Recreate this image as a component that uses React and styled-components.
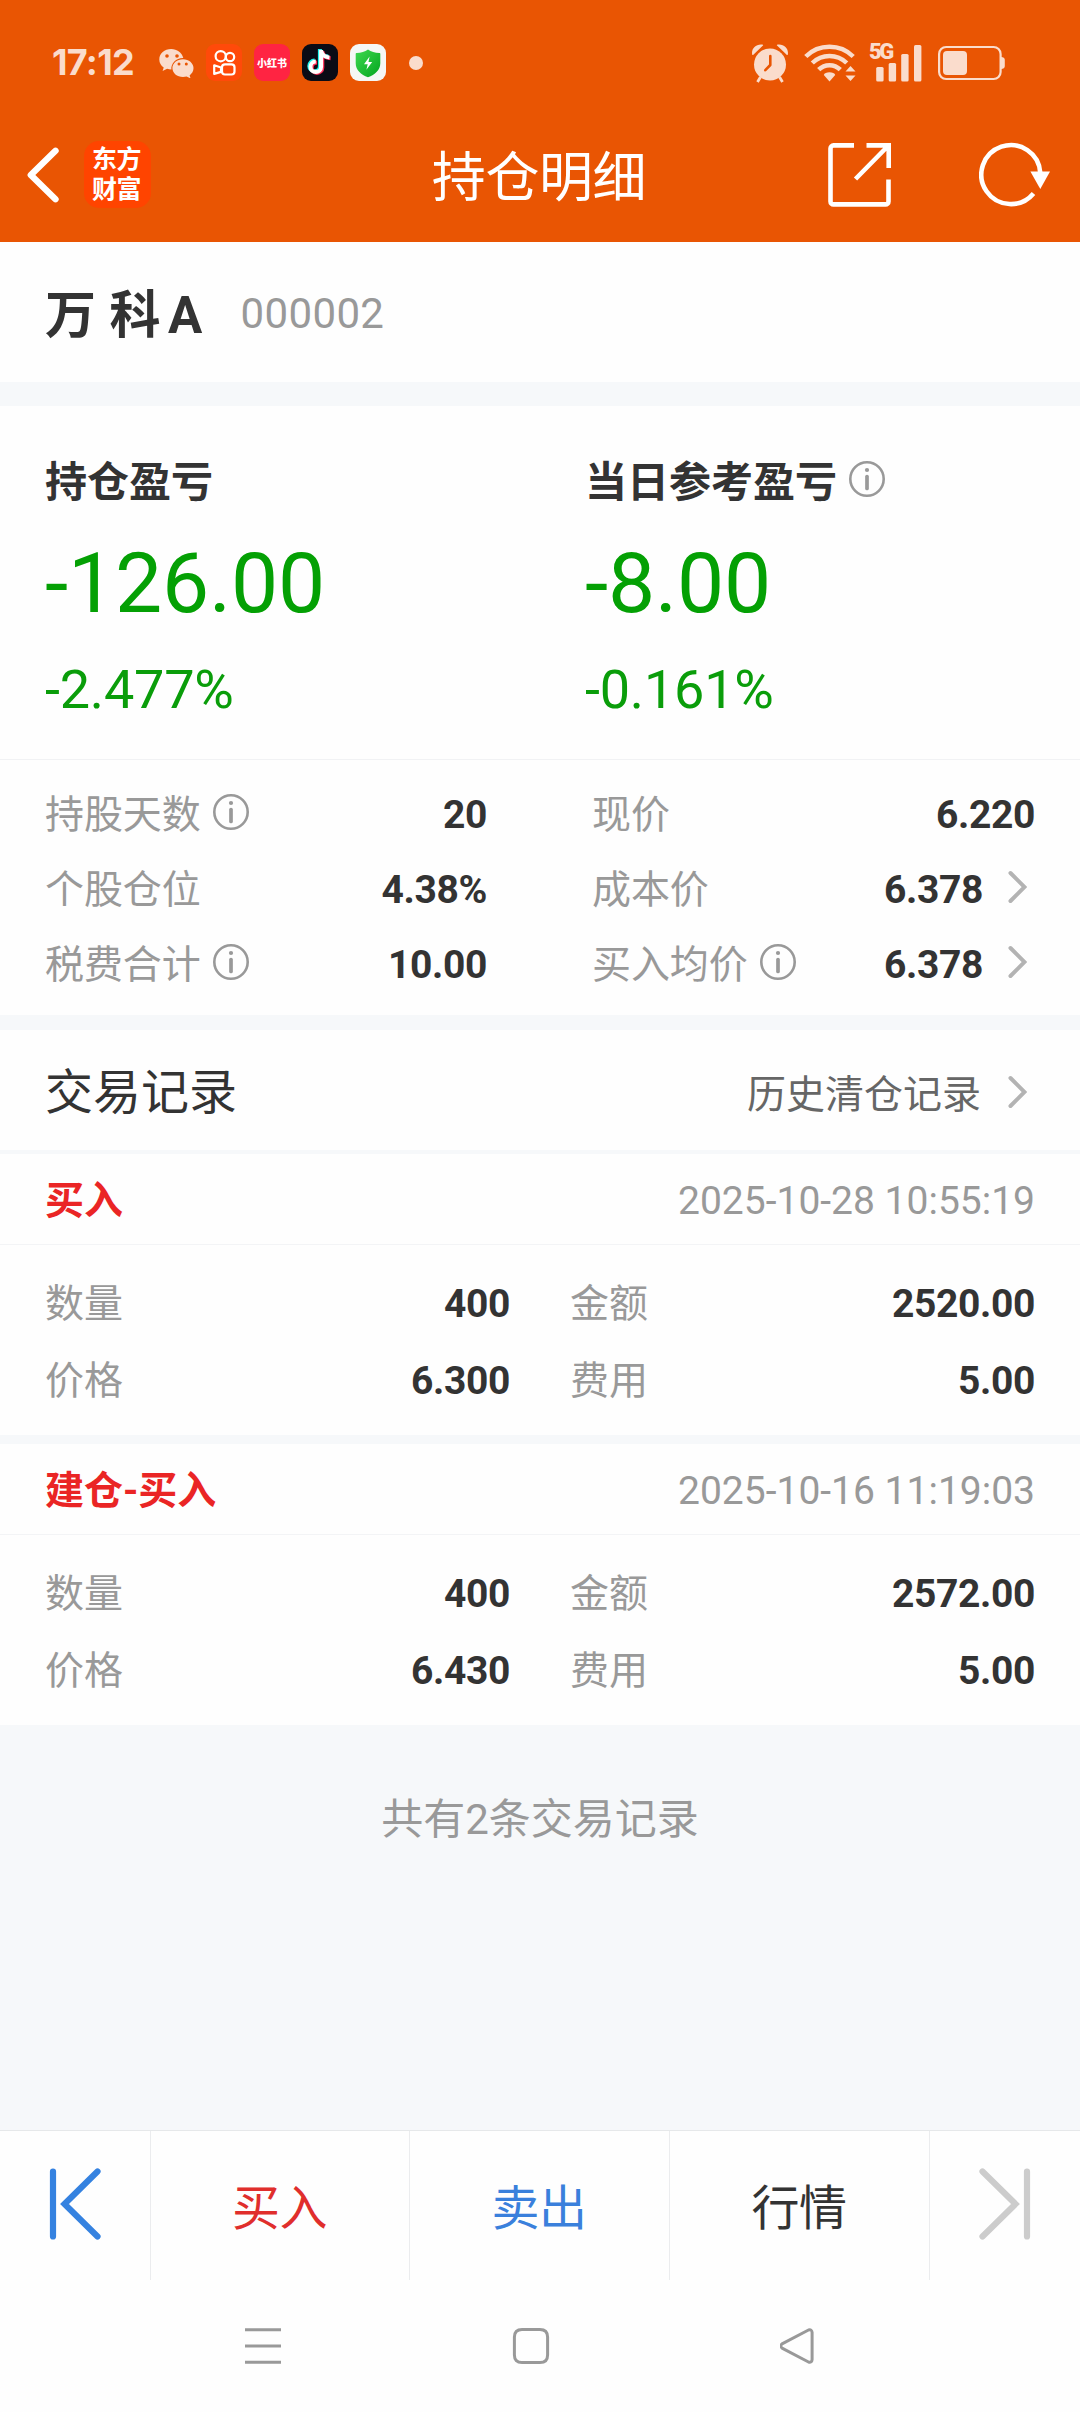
import React from "react";
import styled, { createGlobalStyle } from "styled-components";

const GlobalStyle = createGlobalStyle`
  html, body { margin: 0; padding: 0; background: #f6f8fa; }
  body { font-family: Roboto, "Noto Sans CJK SC", sans-serif; color: #333; }
  *, *::before, *::after { box-sizing: border-box; }
  svg { display: block; flex: none; }
`;

const TINT = "#fadccc";

const Screen = styled.div`
  width: 1080px;
  height: 2412px;
  display: flex;
  flex-direction: column;
  overflow: hidden;
  background: #f6f8fa;
`;

const Header = styled.header`
  background: #e95503;
  height: 242px;
  flex: none;
`;

const StatusBar = styled.div`
  height: 107px;
  padding: 18px 75px 0 52px;
  display: flex;
  align-items: center;
  justify-content: space-between;
  color: ${TINT};
`;

const StatusGroup = styled.div`
  display: flex;
  align-items: center;
  gap: ${(p) => p.$gap}px;
`;

const Clock = styled.span`
  width: 95px;
  padding-bottom: 2px;
  font: 700 36px/44px Inter, sans-serif;
  letter-spacing: -0.7px;
`;

const AppIcon = styled.span`
  width: 36px;
  height: 37px;
  border-radius: 9px;
  background: ${(p) => p.$bg};
  display: flex;
  align-items: center;
  justify-content: center;
  color: #fff;
  font: 900 10px/12px "Noto Sans CJK SC", sans-serif;
  white-space: nowrap;
`;

const Dot = styled.span`
  width: 14px;
  height: 14px;
  margin-left: 11px;
  border-radius: 50%;
  background: ${TINT};
`;

const Signal = styled.span`
  position: relative;
  width: 52px;
  height: 38px;
  margin: 0 1px 0 -1px;
`;

const SignalLabel = styled.span`
  position: absolute;
  left: -1px;
  top: -1px;
  font: 900 22px/18px Roboto, sans-serif;
  letter-spacing: -2.4px;
`;

const NavBar = styled.div`
  height: 135px;
  display: grid;
  grid-template-columns: 1fr auto 1fr;
  align-items: center;
  padding: 0 29px 0 27px;
`;

const NavSide = styled.div`
  display: flex;
  align-items: center;
  justify-content: ${(p) => p.$align};
  gap: ${(p) => p.$gap}px;
`;

const Brand = styled.div`
  width: 67px;
  height: 67px;
  padding: 4px 2px 0 0;
  border-radius: 15px;
  background: #ff4400;
  color: #fff;
  font: 700 25px/30px Roboto, "Noto Sans CJK SC", sans-serif;
  letter-spacing: -0.6px;
  text-align: center;
`;

const Title = styled.h1`
  margin: 0;
  padding-top: 9px;
  color: #fff;
  font-size: 54px;
  line-height: 64px;
  font-weight: 400;
  letter-spacing: -0.4px;
`;

const StockBar = styled.section`
  height: 140px;
  background: #fefefe;
  padding: 4px 45px 0;
  display: flex;
  align-items: center;
`;

const StockName = styled.h2`
  margin: 0;
  padding-top: 3px;
  font-size: 51px;
  line-height: 60px;
  font-weight: 700;
  letter-spacing: 0.4px;
  span { margin-left: 7px; }
`;

const StockCode = styled.span`
  margin-left: 38px;
  color: #999;
  font-size: 42px;
  line-height: 60px;
  letter-spacing: 0.35px;
`;

const Band = styled.div`
  height: ${(p) => p.$h}px;
  flex: none;
  background: #f6f8fa;
`;

const PnlSection = styled.section`
  height: 353px;
  background: #fefefe;
  padding: 50px 45px 0;
  display: grid;
  grid-template-columns: 540px 1fr;
`;

const PnlTitle = styled.h3`
  margin: 0;
  height: 54px;
  display: flex;
  align-items: center;
  gap: 12px;
  font-size: 42px;
  line-height: 54px;
  font-weight: 700;
  svg { margin-top: -8px; }
`;

const PnlAmount = styled.div`
  margin-top: 24px;
  color: #04a004;
  font-size: 84px;
  line-height: 100px;
  letter-spacing: -0.2px;
`;

const PnlPercent = styled.div`
  margin-top: 24px;
  color: #0a9d0a;
  font-size: 54px;
  line-height: 64px;
  letter-spacing: -0.2px;
`;

const StatsSection = styled.section`
  height: 256px;
  background: #fefefe;
  border-top: 1px solid #f1f2f4;
  padding: 17px 45px 0 45px;
  display: grid;
  grid-template-columns: 442px 443px;
  justify-content: space-between;
  grid-auto-rows: 75px;
`;

const Row = styled.div`
  display: flex;
  align-items: center;
  justify-content: space-between;
  font-size: 39px;
  line-height: 46px;
`;

const Label = styled.span`
  display: flex;
  align-items: center;
  gap: 12px;
  color: #999;
  letter-spacing: -0.1px;
  svg { margin-top: -5px; }
`;

const Value = styled.span`
  display: flex;
  align-items: center;
  gap: 25px;
  color: #333;
  font-weight: 700;
  letter-spacing: -0.35px;
  svg { margin: -6px 8px 0 0; }
`;

const RecordsHead = styled.section`
  height: 120px;
  background: #fefefe;
  padding: 6px 45px 0 45px;
  display: flex;
  align-items: center;
  justify-content: space-between;
`;

const RecordsTitle = styled.h3`
  margin: 0;
  font-size: 48px;
  line-height: 58px;
  font-weight: 400;
`;

const HistoryLink = styled.div`
  display: flex;
  align-items: center;
  gap: 27px;
  padding-top: 4px;
  color: #666;
  font-size: 39px;
  line-height: 46px;
  svg { margin: -7px 8px 0 0; }
`;

const Record = styled.article`
  height: 281px;
  background: #fefefe;
`;

const RecordHead = styled.div`
  height: 91px;
  padding: 4px 45px 0 45px;
  border-bottom: 1px solid #f3f4f6;
  display: flex;
  align-items: center;
  justify-content: space-between;
  font-size: 39px;
  line-height: 46px;
`;

const RecordType = styled.span`
  color: #ea2525;
  font-weight: 700;
`;

const RecordTime = styled.time`
  color: #999;
`;

const RecordGrid = styled.div`
  padding: 20px 45px 0 45px;
  display: grid;
  grid-template-columns: 465px 465px;
  justify-content: space-between;
  grid-auto-rows: 77px;
`;

const Summary = styled.p`
  flex: 1;
  margin: 0;
  padding-top: 70px;
  text-align: center;
  color: #999;
  font-size: 42px;
  line-height: 50px;
`;

const ActionBar = styled.nav`
  height: 150px;
  border-top: 1px solid #e6e8ea;
  background: #fefefe;
  display: grid;
  grid-template-columns: 150px 259px 260px 260px 151px;
`;

const Action = styled.button`
  border: 0;
  border-left: ${(p) => (p.$first ? "0" : "1px solid #ebecee")};
  background: none;
  padding: ${(p) => (p.$icon ? "0 0 3px" : "6px 1px 0 0")};
  color: ${(p) => p.$color};
  font: 400 48px/58px Roboto, "Noto Sans CJK SC", sans-serif;
  letter-spacing: -0.5px;
  display: flex;
  align-items: center;
  justify-content: center;
`;

const SystemBar = styled.div`
  height: 132px;
  flex: none;
  background: #fefefe;
  display: flex;
  align-items: center;
  gap: 230px;
  padding-left: 244px;
`;

const InfoIcon = () => (
  <svg width="36" height="36" viewBox="0 0 36 36" fill="none" stroke="#999">
    <circle cx="18" cy="18" r="16.7" strokeWidth="2.6" />
    <circle cx="18" cy="9" r="2.1" fill="#999" stroke="none" />
    <path d="M18 15.5v12" strokeWidth="3.7" strokeLinecap="round" />
  </svg>
);

const Chevron = () => (
  <svg width="19" height="34" viewBox="0 0 19 34" fill="none">
    <path d="M2.5 3 16.5 17 2.5 31" stroke="#b3b3b3" strokeWidth="4" strokeLinecap="round" />
  </svg>
);

const WechatIcon = () => (
  <svg width="35" height="30" viewBox="0 0 35 30" fill={TINT}>
    <path d="M12.2 1C5.500 1 .3 5.600 .3 11.400c0 3.300 1.700 6.200 4.400 8.100L3.600 23l4.500-2.200c1.300.4 2.700.6 4.300.6-.6-5.900 4.800-11.600 11.900-11.400C22.900 4.700 18 1 12.200 1z" />
    <path d="M24 11.200c-6 0-10.600 4-10.600 8.900 0 5 4.600 9 10.600 9 1.300 0 2.500-.2 3.600-.5l4 1.800-1-3c2.400-1.700 3.900-4.300 3.900-7.300 0-4.900-4.600-8.900-10.500-8.900z" />
    <g fill="#e95503">
      <circle cx="8" cy="8" r="1.8" /><circle cx="18" cy="8" r="1.8" />
      <circle cx="20" cy="16" r="1.500" /><circle cx="27.300" cy="16" r="1.500" />
    </g>
  </svg>
);

const KuaishouIcon = () => (
  <svg width="36" height="37" viewBox="0 0 36 37" fill="none" stroke="#fff" strokeWidth="2.200" strokeLinejoin="round">
    <circle cx="14.700" cy="12.200" r="5.100" />
    <circle cx="24" cy="13" r="4.200" />
    <rect x="16" y="20.300" width="12.500" height="10.200" rx="3" />
    <path d="M15 23.500 8.200 21.300v8.600l6.800-2z" />
  </svg>
);

const DouyinIcon = () => {
  const note = "M18.500 5.500v16.800a5.300 5.300 0 1 1-5.300-5.300M18.500 6c.6 4.200 3.500 6.600 8.300 6.900";
  return (
    <svg width="36" height="37" viewBox="0 0 36 37" fill="none" strokeWidth="4">
      <path d={note} stroke="#25f4ee" transform="translate(-.6 -.4)" />
      <path d={note} stroke="#fe2c55" transform="translate(1.800 1.400)" />
      <path d={note} stroke="#fff" transform="translate(.6 .5)" />
    </svg>
  );
};

const ShieldIcon = () => (
  <svg width="36" height="37" viewBox="0 0 36 37">
    <defs>
      <linearGradient id="shield" x1="0" y1="0" x2="1" y2="1">
        <stop offset="0" stopColor="#3fd84f" />
        <stop offset="1" stopColor="#02a51f" />
      </linearGradient>
    </defs>
    <path d="M18 5.500c3 2.200 7 3.400 11.300 3.600.8 0 1 .4 1 1v9.200c0 6.600-5.300 11.600-12.300 14-7-2.400-12.300-7.400-12.300-14v-9.200c0-.6.200-1 1-1C11 8.900 15 7.700 18 5.500z" fill="url(#shield)" />
    <path d="M19.600 12.500 14 20.300h3.700l-1.300 5.400 5.800-7.700h-3.700z" fill="#fff" />
  </svg>
);

const AlarmIcon = () => (
  <svg width="38" height="40" viewBox="0 0 38 40" fill={TINT}>
    <path d="M1.200 11.500C0 6 4.700.8 11.200 1.600c1 .1 1.300.6.500 1.200L2.600 11.500c-.6.700-1.200.7-1.400 0zM36.800 11.500C38 6 33.300.8 26.800 1.600c-1 .1-1.300.6-.5 1.200l9.100 8.700c.6.700 1.200.7 1.400 0z" />
    <circle cx="19" cy="21.500" r="16" />
    <path d="m9.500 34-3 5M28.500 34l3 5" stroke={TINT} strokeWidth="2.800" />
    <path d="M19.300 13v9l-5 5.200" fill="none" stroke="#e95503" strokeWidth="2.600" strokeLinecap="round" strokeLinejoin="round" />
  </svg>
);

const WifiIcon = () => (
  <svg width="52" height="38" viewBox="0 0 52 38" fill="none" stroke={TINT} strokeWidth="4.500">
    <path d="M1.800 12.500c13-13 34.400-13 47.400 0M8.300 19c9.600-9.400 24.800-9.400 34.400 0M14.700 25.700c6-6 15.600-6 21.600 0" />
    <path d="M25.500 37.500 19.800 31c.5-3.600 10.900-3.600 11.400 0z" fill={TINT} stroke="none" />
    <path d="M46.500 22l5 5.500h-10zM46.500 37l5-5.500h-10z" fill={TINT} stroke="none" />
  </svg>
);

const SignalBars = () => (
  <svg width="52" height="38" viewBox="0 0 52 38" fill={TINT}>
    <rect x="6.200" y="23" width="7.400" height="14.500" rx="1.500" />
    <rect x="18.700" y="19" width="7.400" height="18.500" rx="1.500" />
    <rect x="31.200" y="10" width="7.400" height="27.500" rx="1.500" />
    <rect x="44" y="1" width="7.400" height="36.500" rx="1.500" />
  </svg>
);

const BatteryIcon = () => (
  <svg width="67" height="36" viewBox="0 0 67 36" fill="none">
    <rect x="1.100" y="2" width="61.500" height="32" rx="7" stroke={TINT} strokeWidth="2.200" />
    <rect x="5" y="6" width="24" height="24" rx="4" fill={TINT} />
    <path d="M63 12c2.500 0 3.800 1 3.800 3v6c0 2-1.300 3-3.800 3z" fill={TINT} />
  </svg>
);

const BackIcon = () => (
  <svg width="32" height="56" viewBox="0 0 32 56" fill="none">
    <path d="M28.500 3.800 3.800 28 28.500 52.200" stroke="#fff" strokeWidth="6.400" strokeLinecap="round" strokeLinejoin="round" />
  </svg>
);

const ShareIcon = () => (
  <svg width="63" height="64" viewBox="0 0 63 64" fill="none" stroke="#fff" strokeWidth="4.600">
    <path d="M26 2.400H5.500a3 3 0 0 0-3 3v53a3 3 0 0 0 3 3h52a3 3 0 0 0 3-3V36.500M38.500 2.400h22.200V25M27.500 36 60 3" />
  </svg>
);

const RefreshIcon = () => (
  <svg width="72" height="66" viewBox="0 0 72 66" fill="none">
    <path d="M54.500 51.500A29.500 29.500 0 1 1 61.300 31" stroke="#fff" strokeWidth="4.600" />
    <path d="M51.400 29.500H71L61.300 47z" fill="#fff" />
  </svg>
);

const EndIcon = ({ flip, color }) => (
  <svg width="52" height="72" viewBox="0 0 52 72" fill="none">
    <path
      d="M4 3.500v65M48.500 3.500 15.500 36l33 32.500"
      transform={flip ? "translate(52 0) scale(-1 1)" : undefined}
      stroke={color}
      strokeWidth="6.200"
      strokeLinecap="round"
    />
  </svg>
);

const SystemIcon = ({ d }) => (
  <svg width="38" height="38" viewBox="0 0 38 38" fill="none" stroke="#999" strokeWidth="3" strokeLinejoin="round">
    <path d={d} />
  </svg>
);

const STATS = [
  { label: "持股天数", info: true, value: "20" },
  { label: "现价", value: "6.220" },
  { label: "个股仓位", value: "4.38%" },
  { label: "成本价", value: "6.378", link: true },
  { label: "税费合计", info: true, value: "10.00" },
  { label: "买入均价", info: true, value: "6.378", link: true },
];

const RECORDS = [
  { type: "买入", time: "2025-10-28 10:55:19", cells: [["数量", "400"], ["金额", "2520.00"], ["价格", "6.300"], ["费用", "5.00"]] },
  { type: "建仓-买入", time: "2025-10-16 11:19:03", cells: [["数量", "400"], ["金额", "2572.00"], ["价格", "6.430"], ["费用", "5.00"]] },
];

const Stat = ({ label, value, info, link }) => (
  <Row>
    <Label>{label}{info && <InfoIcon />}</Label>
    <Value>{value}{link && <Chevron />}</Value>
  </Row>
);

const Pnl = ({ title, info, amount, percent }) => (
  <div>
    <PnlTitle>{title}{info && <InfoIcon />}</PnlTitle>
    <PnlAmount>{amount}</PnlAmount>
    <PnlPercent>{percent}</PnlPercent>
  </div>
);

export default function App() {
  return (
    <Screen>
      <GlobalStyle />
      <Header>
        <StatusBar>
          <StatusGroup $gap={12}>
            <Clock>17:12</Clock>
            <WechatIcon />
            <AppIcon $bg="#ff4a0a"><KuaishouIcon /></AppIcon>
            <AppIcon $bg="#ff2442">小红书</AppIcon>
            <AppIcon $bg="#0a0b15"><DouyinIcon /></AppIcon>
            <AppIcon $bg="#f5f7f5"><ShieldIcon /></AppIcon>
            <Dot />
          </StatusGroup>
          <StatusGroup $gap={15}>
            <AlarmIcon />
            <WifiIcon />
            <Signal><SignalLabel>5G</SignalLabel><SignalBars /></Signal>
            <BatteryIcon />
          </StatusGroup>
        </StatusBar>
        <NavBar>
          <NavSide $align="flex-start" $gap={25}>
            <BackIcon />
            <Brand>东方<br />财富</Brand>
          </NavSide>
          <Title>持仓明细</Title>
          <NavSide $align="flex-end" $gap={88}>
            <ShareIcon />
            <RefreshIcon />
          </NavSide>
        </NavBar>
      </Header>

      <StockBar>
        <StockName>万 科<span>A</span></StockName>
        <StockCode>000002</StockCode>
      </StockBar>
      <Band $h={24} />

      <PnlSection>
        <Pnl title="持仓盈亏" amount="-126.00" percent="-2.477%" />
        <Pnl title="当日参考盈亏" info amount="-8.00" percent="-0.161%" />
      </PnlSection>
      <StatsSection>
        {STATS.map((s) => <Stat key={s.label} {...s} />)}
      </StatsSection>
      <Band $h={15} />

      <RecordsHead>
        <RecordsTitle>交易记录</RecordsTitle>
        <HistoryLink>历史清仓记录<Chevron /></HistoryLink>
      </RecordsHead>
      {RECORDS.map((r, i) => (
        <React.Fragment key={r.time}>
          <Band $h={i ? 9 : 4} />
          <Record>
            <RecordHead>
              <RecordType>{r.type}</RecordType>
              <RecordTime>{r.time}</RecordTime>
            </RecordHead>
            <RecordGrid>
              {r.cells.map(([label, value]) => <Stat key={label} label={label} value={value} />)}
            </RecordGrid>
          </Record>
        </React.Fragment>
      ))}
      <Summary>共有2条交易记录</Summary>

      <ActionBar>
        <Action $first $icon><EndIcon color="#3582e0" /></Action>
        <Action $color="#e02e2c">买入</Action>
        <Action $color="#3a80dc">卖出</Action>
        <Action $color="#333">行情</Action>
        <Action $icon><EndIcon flip color="#ccc" /></Action>
      </ActionBar>
      <SystemBar>
        <SystemIcon d="M1 2.700h36M1 19h36M1 35.300h36" />
        <SystemIcon d="M10 2.400h18q7.600 0 7.600 7.600v18q0 7.600-7.600 7.600H10q-7.600 0-7.600-7.600V10q0-7.600 7.600-7.600z" />
        <SystemIcon d="M28.500 3 2.500 16.600q-3.500 2.400 0 4.800L28.500 35q3.300 1 3.600-2.500v-27Q31.800 2 28.500 3z" />
      </SystemBar>
    </Screen>
  );
}
